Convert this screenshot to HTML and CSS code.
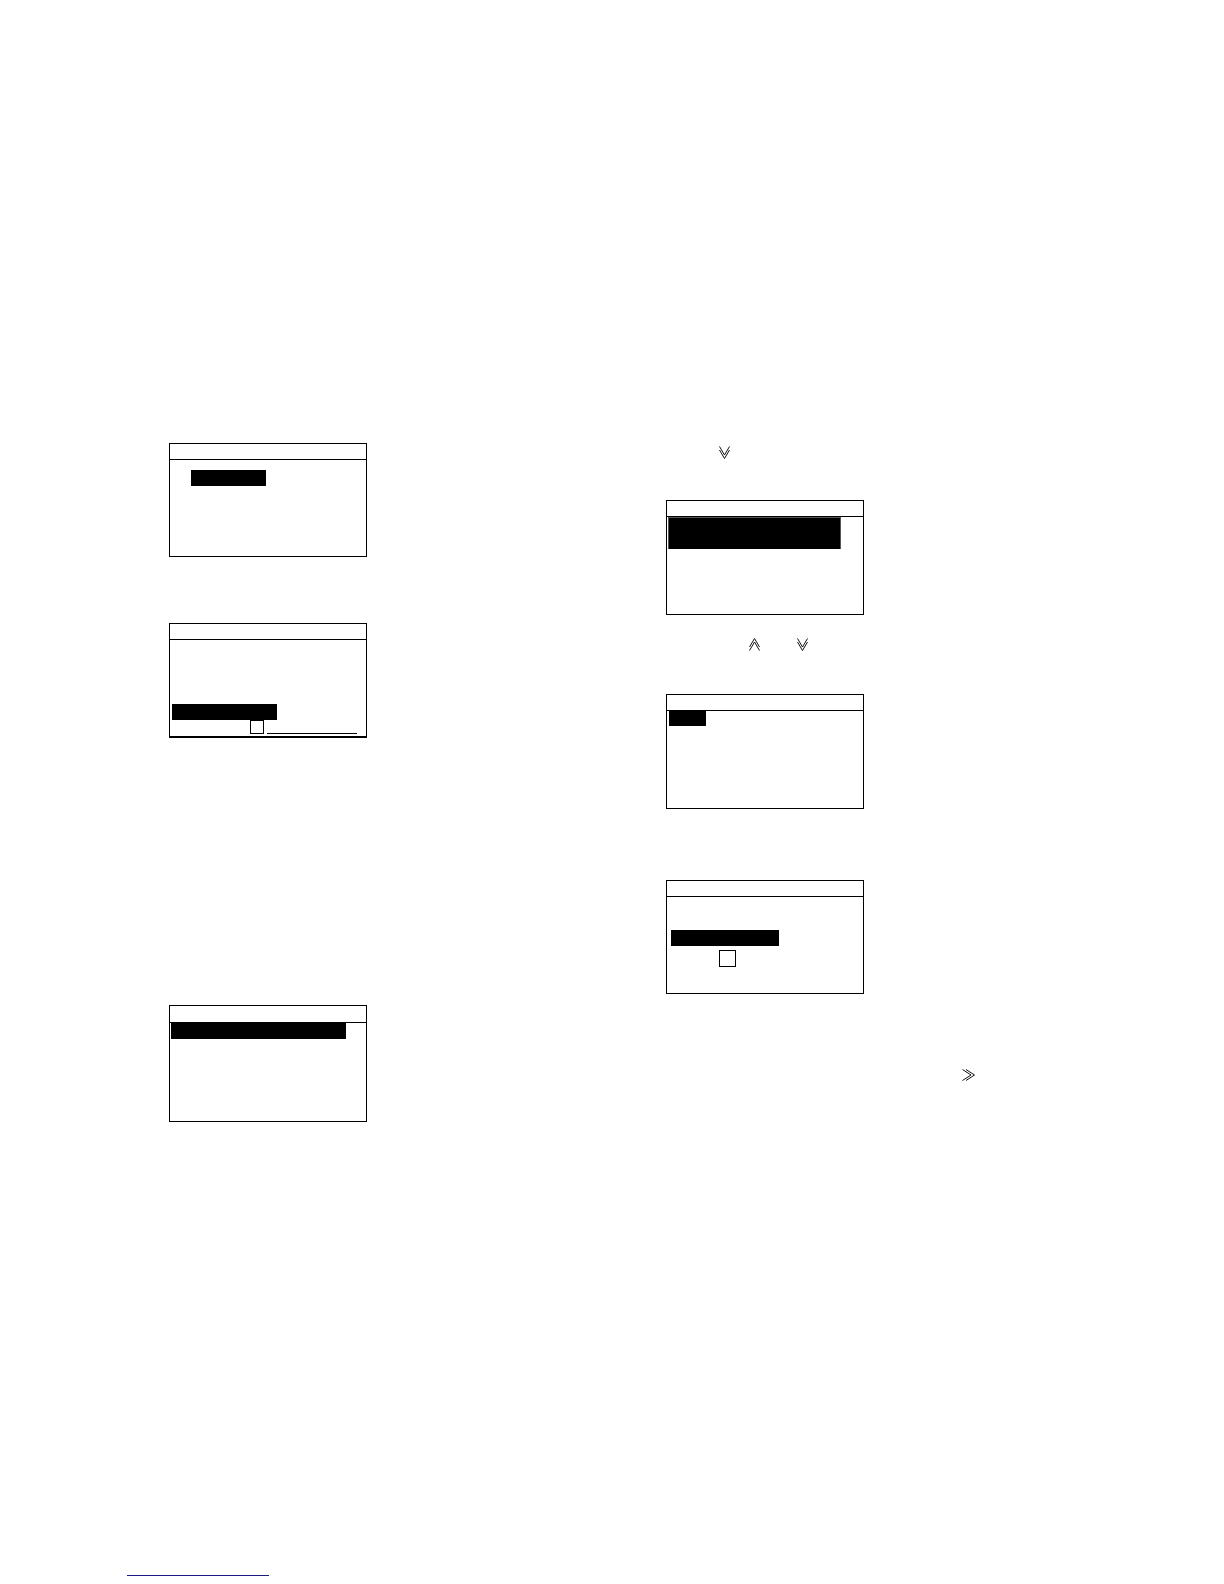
FILE: index.html
```html
<!DOCTYPE html>
<html lang="en">
<head>
<meta charset="utf-8">
<meta name="viewport" content="width=device-width, initial-scale=1">
<title>Display screens</title>
<link rel="stylesheet" href="styles.css">
</head>
<body>
<svg class="defs" aria-hidden="true">
  <symbol id="down" viewBox="0 0 11 13"><path d="M.5 .5L5.5 9L10.5 .5M.5 4L5.5 12.5L10.5 4"/></symbol>
  <symbol id="up" viewBox="0 0 11 13"><path d="M.5 12.5L5.5 4L10.5 12.5M.5 9L5.5 .5L10.5 9"/></symbol>
  <symbol id="right" viewBox="0 0 13 12"><path d="M.5 .5L9 6L.5 11.5M4 .5L12.5 6L4 11.5"/></symbol>
</svg>
<main class="page">
  <section class="column">
    <div class="screen">
      <div class="title"></div>
      <div class="body body-menu"><div class="highlight w-menu"></div></div>
    </div>
    <div class="screen screen-entry">
      <div class="title"></div>
      <div class="body body-entry">
        <div class="highlight w-entry"></div>
        <div class="entry"><span class="box"></span><span class="blank"></span></div>
      </div>
    </div>
    <div class="screen screen-list">
      <div class="title title-tall"></div>
      <div class="body body-list"><div class="highlight w-list"></div></div>
    </div>
  </section>
  <section class="column">
    <div class="step step-first"><svg class="arrow"><use href="#down"/></svg></div>
    <div class="screen">
      <div class="title"></div>
      <div class="body body-double"><div class="highlight highlight-double"></div></div>
    </div>
    <div class="step step-pair">
      <svg class="arrow"><use href="#up"/></svg>
      <svg class="arrow"><use href="#down"/></svg>
    </div>
    <div class="screen">
      <div class="title"></div>
      <div class="body body-short"><div class="highlight highlight-short"></div></div>
    </div>
    <div class="screen screen-select">
      <div class="title"></div>
      <div class="body body-select">
        <div class="highlight w-select"></div>
        <div class="box box-large"></div>
      </div>
    </div>
    <div class="step step-last"><svg class="arrow arrow-wide"><use href="#right"/></svg></div>
  </section>
</main>
<footer class="footer"><div class="rule"></div></footer>
</body>
</html>
```
FILE: styles.css
```css
*, *::before, *::after { box-sizing: border-box; }

body {
  margin: 0;
  background: #fff;
  color: #000;
  font-family: "Liberation Sans", Arial, sans-serif;
}

.defs { display: none; }

.page {
  display: grid;
  grid-template-columns: 497px 1fr;
  padding: 443px 0 0 169px;
}

/* Device display frames */
.screen {
  width: 198px;
  border: 1px solid #000;
}
.title {
  height: 16px;
  border-bottom: 1px solid #000;
}
.title-tall { height: 17px; }
.body { min-height: 96px; }
.body-menu { padding: 10px 0 0 21px; }

.screen-entry {
  margin-top: 66px;
  border-bottom-width: 2px;
}
.body-entry { padding: 64px 0 0 2px; }

.screen-list { margin-top: 267px; }
.body-list {
  min-height: 98px;
  padding-left: 1px;
}

.body-double {
  min-height: 97px;
  padding-left: 1px;
}
.body-short {
  min-height: 97px;
  padding-left: 2px;
}
.screen-select { margin-top: 71px; }
.body-select { padding: 33px 0 0 4px; }

/* Selected rows */
.highlight {
  height: 16px;
  background: #000;
}
.w-menu { width: 75px; }
.w-entry { width: 105px; }
.w-list { width: 175px; }
.w-select { width: 108px; }
.highlight-double {
  width: 173px;
  height: 32px;
  border: 1px solid #555;
  border-bottom: 0;
}
.highlight-short {
  width: 37px;
  height: 15px;
}

/* Character cells */
.entry {
  display: flex;
  align-items: flex-end;
  gap: 3px;
  padding-left: 78px;
}
.box {
  width: 14px;
  height: 14px;
  border: 1px solid #000;
}
.box-large {
  width: 17px;
  height: 17px;
  margin: 4px 0 0 48px;
}
.blank {
  width: 90px;
  border-bottom: 1px solid #000;
}

/* Arrow key symbols between screens */
.step { display: flex; }
.step-first {
  height: 57px;
  padding: 3px 0 0 53px;
}
.step-pair {
  height: 79px;
  gap: 37px;
  padding: 23px 0 0 83px;
}
.step-last { padding: 75px 0 0 296px; }
.arrow {
  width: 11px;
  height: 13px;
  fill: none;
  stroke: #111;
  stroke-width: 1;
}
.arrow-wide {
  width: 13px;
  height: 12px;
}

.footer { padding: 453px 0 8px 127px; }
.rule {
  width: 142px;
  border-bottom: 1px solid #1a1a80;
}
```
